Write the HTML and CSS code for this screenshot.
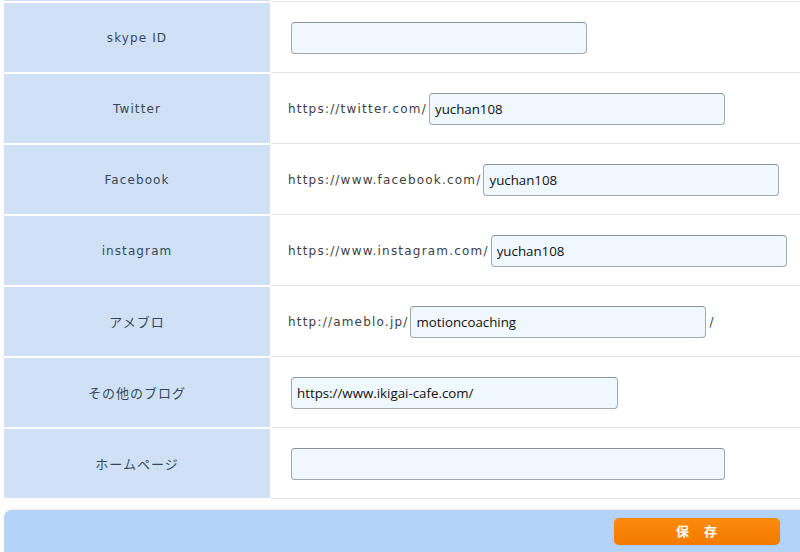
FILE: index.html
```html
<!DOCTYPE html>
<html lang="ja">
<head>
<meta charset="utf-8">
<link rel="stylesheet" href="styles.css">
</head>
<body>
<div class="page">
  <div class="form">
    <div class="row stub"><div class="label"></div><div class="field"></div></div>
    <div class="row">
      <div class="label">skype ID</div>
      <div class="field"><input class="inp w295" type="text" value=""></div>
    </div>
    <div class="row">
      <div class="label">Twitter</div>
      <div class="field"><span class="prefix">https://twitter.com/</span><input class="inp w295" type="text" value="yuchan108"></div>
    </div>
    <div class="row">
      <div class="label">Facebook</div>
      <div class="field"><span class="prefix">https://www.facebook.com/</span><input class="inp w295" type="text" value="yuchan108"></div>
    </div>
    <div class="row">
      <div class="label">instagram</div>
      <div class="field"><span class="prefix">https://www.instagram.com/</span><input class="inp w295" type="text" value="yuchan108"></div>
    </div>
    <div class="row">
      <div class="label jp">アメブロ</div>
      <div class="field"><span class="prefix">http://ameblo.jp/</span><input class="inp w296" type="text" value="motioncoaching"><span class="suffix">/</span></div>
    </div>
    <div class="row">
      <div class="label jp">その他のブログ</div>
      <div class="field"><input class="inp w327" type="text" value="https://www.ikigai-cafe.com/"></div>
    </div>
    <div class="row">
      <div class="label jp">ホームページ</div>
      <div class="field"><input class="inp w433" type="text" value=""></div>
    </div>
  </div>
  <div class="footer">
    <button class="save" type="button">保　存</button>
  </div>
</div>
</body>
</html>
```
FILE: styles.css
```css
* { box-sizing: border-box; }
html, body { margin: 0; padding: 0; background: #fff; overflow: hidden; }
body { font-family: "DejaVu Sans", "Noto Sans CJK JP", sans-serif; }
.page { width: 800px; height: 552px; overflow: hidden; }
.form { padding-left: 4px; }
.row { display: flex; height: 69px; margin-bottom: 2px; }
.row.stub { height: 1px; margin-bottom: 2px; }
.label {
  width: 266px;
  flex: none;
  background: #d0e1f5;
  display: flex;
  align-items: center;
  justify-content: center;
  font-size: 12px;
  letter-spacing: 1.1px;
  color: #34475f;
}
.label.jp { font-family: "Noto Sans CJK JP", sans-serif; font-size: 13px; letter-spacing: 1px; padding-bottom: 1px; }
.field {
  flex: 1;
  margin-left: 1px;
  display: flex;
  align-items: center;
  padding-left: 20px;
  border-bottom: 1px solid #dfe3ea;
  height: 70px;
}
.stub .field { height: 2px; }
.prefix, .suffix {
  font-size: 12px;
  letter-spacing: 1.2px;
  color: #3d3f44;
}
.prefix { margin-left: -3px; margin-right: 2px; }
.suffix { margin-left: 3px; }
.inp {
  height: 32px;
  background: #eff7ff;
  border: 1px solid #a3a8ad;
  border-top-color: #8d9296;
  border-radius: 4px;
  padding: 0 5px;
  font-family: "Open Sans", "Noto Sans", sans-serif;
  font-size: 13.3px;
  color: #111;
  outline: none;
}
.w295 { width: 296px; }
.w296 { width: 296px; }
.w327 { width: 327px; }
.w433 { width: 434px; }
.footer {
  margin: 12px 0 0 4px;
  height: 60px;
  background: #b3d4f8;
  border-radius: 8px 0 0 0;
  box-shadow: 0 -1px 2px rgba(0,0,0,0.08);
  display: flex;
  justify-content: flex-end;
  align-items: flex-start;
  padding: 8px 20px 0 0;
}
.save {
  width: 166px;
  height: 27px;
  border: none;
  border-radius: 5px;
  background: linear-gradient(#fc8c0c, #f37a00);
  box-shadow: 0 0 1px rgba(0,0,0,0.25);
  color: #fff;
  font-family: "Noto Sans CJK JP", sans-serif;
  font-weight: bold;
  font-size: 13px;
  letter-spacing: 1px;
  padding: 0 0 2px 0;
}
```
